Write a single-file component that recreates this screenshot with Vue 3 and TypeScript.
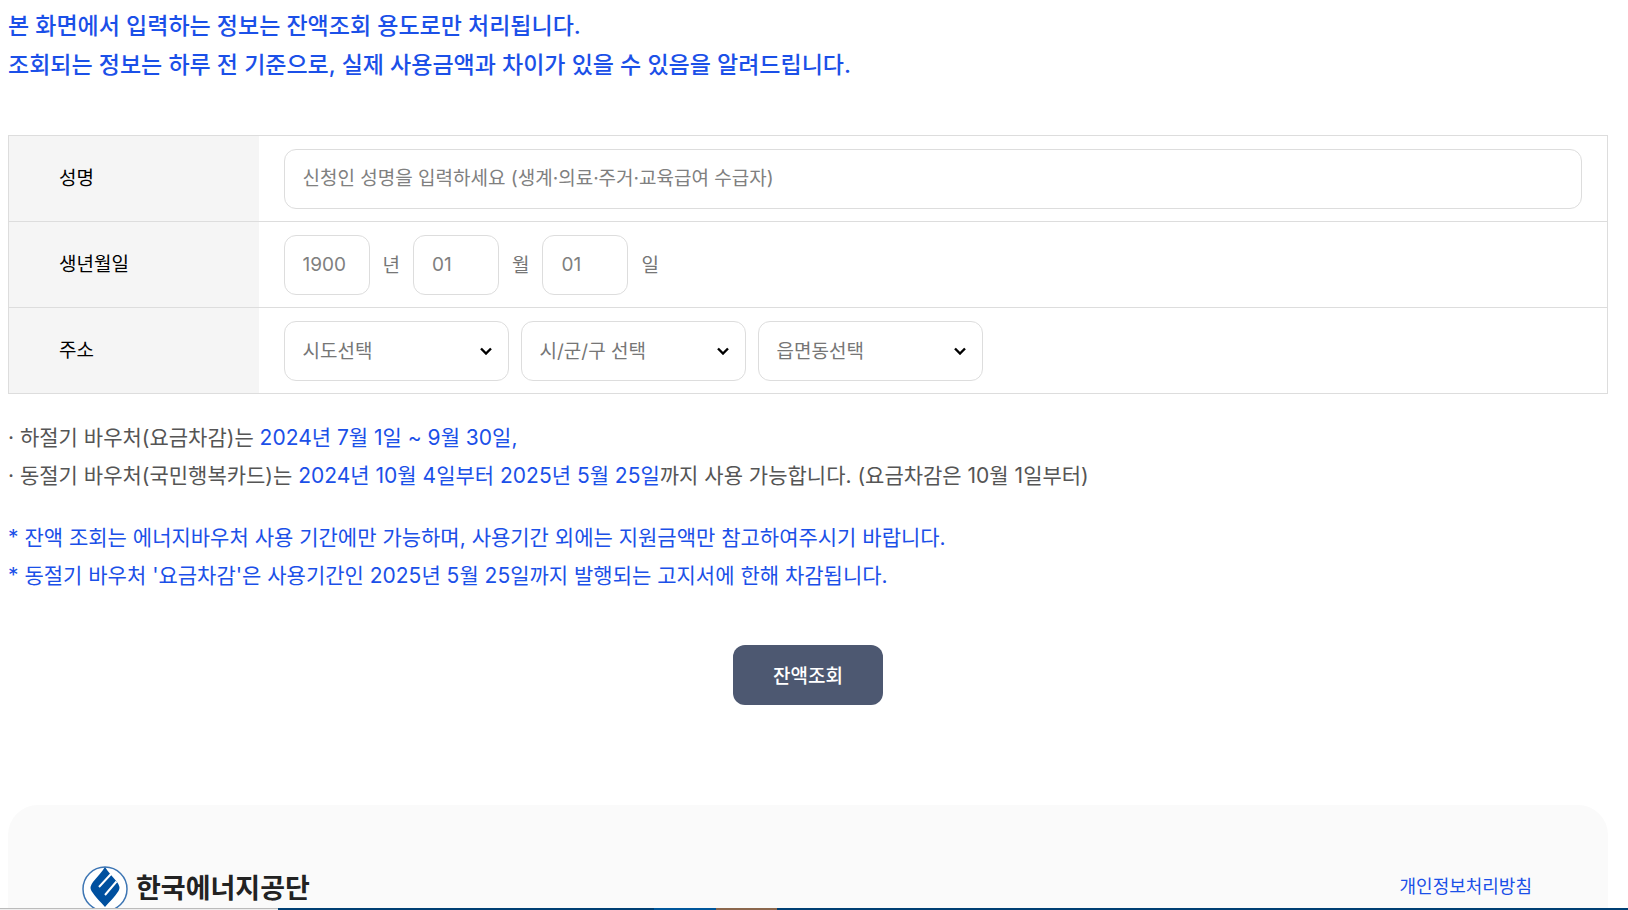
<script setup lang="ts">
import { ref } from 'vue'

interface Region {
  id: string
  label: string
  placeholder: string
}

const regions: Region[] = [
  { id: 'sido', label: '시도', placeholder: '시도선택' },
  { id: 'sigungu', label: '시/군/구', placeholder: '시/군/구 선택' },
  { id: 'dong', label: '읍면동', placeholder: '읍면동선택' },
]

const birthParts = [
  { id: 'year', unit: '년', placeholder: '1900', max: 4 },
  { id: 'month', unit: '월', placeholder: '01', max: 2 },
  { id: 'day', unit: '일', placeholder: '01', max: 2 },
]

const name = ref('')
const birth = ref<Record<string, string>>({ year: '', month: '', day: '' })
const selected = ref<Record<string, string>>({ sido: '', sigungu: '', dong: '' })
</script>

<template>
  <main class="page">
    <p class="notice">
      본 화면에서 입력하는 정보는 잔액조회 용도로만 처리됩니다.<br />
      조회되는 정보는 하루 전 기준으로, 실제 사용금액과 차이가 있을 수 있음을 알려드립니다.
    </p>

    <form @submit.prevent>
      <table class="form-table">
        <tbody>
          <tr>
            <th scope="row"><label for="name">성명</label></th>
            <td>
              <div class="fields">
                <input
                  id="name"
                  v-model="name"
                  class="field name"
                  type="text"
                  placeholder="신청인 성명을 입력하세요 (생계·의료·주거·교육급여 수급자)"
                />
              </div>
            </td>
          </tr>
          <tr>
            <th scope="row">생년월일</th>
            <td>
              <div class="fields">
                <template v-for="part in birthParts" :key="part.id">
                  <input
                    :id="part.id"
                    v-model="birth[part.id]"
                    class="field birth"
                    type="text"
                    :maxlength="part.max"
                    :placeholder="part.placeholder"
                  />
                  <label class="unit" :for="part.id">{{ part.unit }}</label>
                </template>
              </div>
            </td>
          </tr>
          <tr>
            <th scope="row">주소</th>
            <td>
              <div class="fields regions">
                <select
                  v-for="region in regions"
                  :id="region.id"
                  :key="region.id"
                  v-model="selected[region.id]"
                  class="field region"
                  :aria-label="region.label"
                >
                  <option value="">{{ region.placeholder }}</option>
                </select>
              </div>
            </td>
          </tr>
        </tbody>
      </table>

      <div class="guide">
        <p>
          · 하절기 바우처(요금차감)는 <em>2024년 7월 1일 ~ 9월 30일,</em><br />
          · 동절기 바우처(국민행복카드)는 <em>2024년 10월 4일부터 2025년 5월 25일</em>까지 사용 가능합니다. (요금차감은 10월 1일부터)
        </p>
        <p class="blue">
          * 잔액 조회는 에너지바우처 사용 기간에만 가능하며, 사용기간 외에는 지원금액만 참고하여주시기 바랍니다.<br />
          * 동절기 바우처 '요금차감'은 사용기간인 2025년 5월 25일까지 발행되는 고지서에 한해 차감됩니다.
        </p>
      </div>

      <div class="actions">
        <button class="submit" type="submit">잔액조회</button>
      </div>
    </form>

    <footer class="footer">
      <a class="brand" href="#">
        <svg class="mark" viewBox="0 0 46 46" aria-hidden="true">
          <circle cx="23" cy="23" r="22" fill="#fff" stroke="#3e76b4" stroke-width="1.5" />
          <path d="M23 1C26 6 31 11 35 16Q39 21 36.500 25C33 31 27 36 23 41C19 36 13 31 9.500 25Q7 21 11 16C15 11 20 6 23 1Z" fill="#00509f" />
          <path d="M17 21L29 8M23 29L34.500 15.500" fill="none" stroke="#fff" stroke-width="2" />
        </svg>
        <span>한국에너지공단</span>
      </a>
      <a class="policy" href="#">개인정보처리방침</a>
    </footer>

    <div class="edge" aria-hidden="true">
      <i class="edge-light"></i><i class="edge-navy"></i><i class="edge-blue"></i><i class="edge-brown"></i><i class="edge-rest"></i>
    </div>
  </main>
</template>

<style>
html,
body {
  height: 100%;
  overflow: hidden;
}

body {
  margin: 0;
  background: #fff;
}
</style>

<style scoped>
.page {
  height: 100vh;
  box-sizing: border-box;
  overflow: hidden;
  padding: 7px 20px 0 8px;
  color: #555;
  font-family: Inter, 'Noto Sans CJK KR', sans-serif;
  font-size: 19px;
}

.page * {
  box-sizing: border-box;
}

.notice {
  margin: 0 0 50px;
  color: #1b50e8;
  font-size: 23px;
  font-weight: 500;
  line-height: 39px;
}

.form-table {
  width: 100%;
  border: 1px solid #ddd;
  border-collapse: collapse;
}

.form-table tr {
  height: 86px;
  border-bottom: 1px solid #ddd;
}

.form-table th {
  width: 250px;
  padding: 0 50px 4px;
  background: #f5f5f5;
  color: #000;
  font-weight: 400;
  text-align: left;
}

.form-table td {
  padding: 12px 25px;
}

.fields {
  display: flex;
  align-items: center;
  gap: 13px;
}

.regions {
  gap: 12px;
}

.field {
  height: 60px;
  padding: 0 18px;
  border: 1px solid #ddd;
  border-radius: 12px;
  background: #fff;
  color: #767676;
  font: inherit;
}

.field::placeholder {
  color: #808080;
}

.name {
  width: 100%;
}

.birth {
  width: 86px;
}

.unit {
  padding-bottom: 2px;
  color: #767676;
}

.region {
  width: 225px;
  padding: 2px 40px 0 18px;
  appearance: none;
  background: #fff url("data:image/svg+xml,%3Csvg xmlns='http://www.w3.org/2000/svg' width='12' height='8' viewBox='0 0 12 8'%3E%3Cpath d='M1 1.500L6 6.500L11 1.500' fill='none' stroke='%23000' stroke-width='2.400'/%3E%3C/svg%3E") no-repeat right 16px center;
}

.guide {
  padding-top: 25px;
  font-size: 21px;
  line-height: 38px;
}

.guide p {
  margin: 0 0 24px;
}

.guide em {
  color: #1b50e8;
  font-style: normal;
}

.guide .blue {
  margin: 0;
  color: #1b50e8;
}

.actions {
  display: flex;
  justify-content: center;
  padding: 50px 0 100px;
}

.submit {
  width: 150px;
  height: 60px;
  padding: 0 0 2px;
  border: 0;
  border-radius: 12px;
  background: #4d5871;
  color: #fff;
  font: inherit;
  font-weight: 500;
}

.footer {
  display: flex;
  justify-content: space-between;
  align-items: flex-start;
  padding: 61px 76px 60px 74px;
  border-radius: 30px 30px 0 0;
  background: #fafafa;
}

.brand {
  display: flex;
  align-items: center;
  gap: 8px;
  color: #222;
  font-size: 27px;
  font-weight: 700;
  line-height: 40px;
  text-decoration: none;
}

.mark {
  width: 46px;
  height: 46px;
}

.policy {
  color: #1b50e8;
  font-size: 18px;
  line-height: 42px;
  text-decoration: none;
}

.edge {
  position: fixed;
  right: 0;
  bottom: 0;
  left: 0;
  display: flex;
  height: 2px;
}

.edge-light {
  width: 278px;
  border-top: 1px solid #bbb;
  background: #eee;
}

.edge-navy {
  width: 376px;
  background: #003f73;
}

.edge-blue {
  width: 62px;
  background: #00569b;
}

.edge-brown {
  width: 61px;
  background: #8b674d;
}

.edge-rest {
  flex: 1;
  background: #003f73;
}
</style>
